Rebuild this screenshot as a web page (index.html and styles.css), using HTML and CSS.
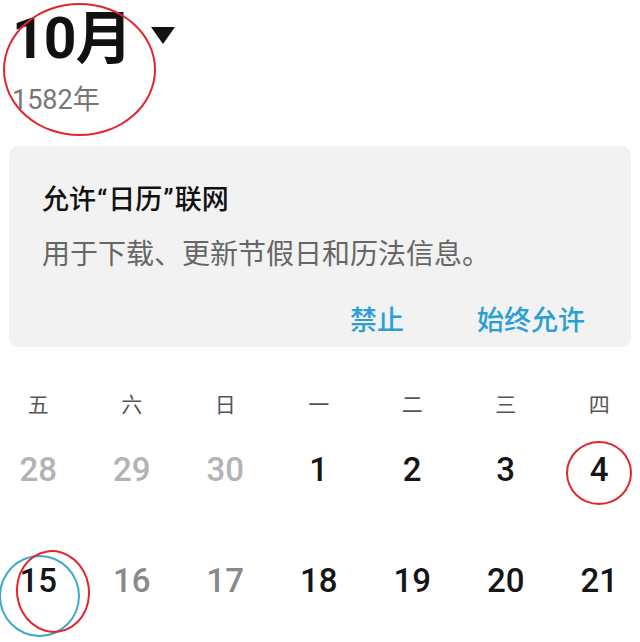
FILE: index.html
```html
<!DOCTYPE html>
<html lang="zh-CN">
<head>
<meta charset="utf-8">
<link rel="stylesheet" href="styles.css">
</head>
<body>
<div class="page">
  <header class="header">
    <div class="month-row">
      <span class="month">10月</span>
      <svg class="caret" width="24" height="17" viewBox="0 0 24 17"><polygon points="0,0 24,0 12,17" fill="#111"/></svg>
    </div>
    <div class="year">1582年</div>
  </header>

  <section class="card">
    <div class="card-title">允许<span class="quote">“</span>日历<span class="quote">”</span>联网</div>
    <div class="card-body">用于下载、更新节假日和历法信息。</div>
    <div class="card-actions">
      <span class="btn">禁止</span>
      <span class="btn">始终允许</span>
    </div>
  </section>

  <div class="weekdays">
    <span>五</span><span>六</span><span>日</span><span>一</span><span>二</span><span>三</span><span>四</span>
  </div>
  <div class="dates">
    <span class="other">28</span><span class="other">29</span><span class="other">30</span><span>1</span><span>2</span><span>3</span><span>4</span>
  </div>
  <div class="dates row2">
    <span>15</span><span class="muted">16</span><span class="muted">17</span><span>18</span><span>19</span><span>20</span><span>21</span>
  </div>

  <div class="mark mark-header"></div>
  <div class="mark mark-four"></div>
  <div class="mark mark-cyan"></div>
  <div class="mark mark-fifteen"></div>
</div>
</body>
</html>
```

FILE: styles.css
```css
* { box-sizing: border-box; }
html, body { margin: 0; padding: 0; background: #fff; }
body {
  font-family: Roboto, "Noto Sans CJK SC", sans-serif;
  color: #111;
  width: 640px;
  height: 642px;
  overflow: hidden;
}
.page { position: relative; width: 640px; height: 642px; }

.header { padding: 6px 0 0 12px; }
.month-row { display: flex; align-items: flex-start; gap: 20px; }
.month {
  font-size: 57px;
  font-weight: 700;
  line-height: 66px;
  letter-spacing: -1px;
}
.caret { margin-top: 21px; }
.year {
  font-size: 27px;
  color: #777;
  line-height: 30px;
  margin-top: 13px;
}

.card {
  margin: 31px 9px 0;
  height: 201px;
  background: #f2f2f2;
  border-radius: 10px;
  padding: 36px 46px 0 33px;
  font-family: "Noto Sans CJK SC", sans-serif;
}
.card-title {
  font-size: 27px;
  font-weight: 500;
  line-height: 32px;
  color: #111;
}
.card-title .quote {
  font-family: Roboto, sans-serif;
  font-weight: 500;
  padding: 0 1px;
}
.card-body {
  font-size: 28px;
  line-height: 32px;
  color: #666;
  margin-top: 20px;
}
.card-actions {
  display: flex;
  justify-content: flex-end;
  gap: 73px;
  margin-top: 35px;
}
.btn {
  font-size: 27px;
  line-height: 32px;
  color: #2a9fd6;
  font-weight: 500;
}

.weekdays, .dates {
  display: grid;
  grid-template-columns: repeat(7, 93.5px);
  margin-left: -8.5px;
  text-align: center;
}
.weekdays {
  margin-top: 43px;
  font-family: "Noto Sans CJK SC", sans-serif;
  font-size: 21px;
  line-height: 26px;
  color: #555;
}
.dates {
  font-size: 33px;
  font-weight: 500;
  line-height: 40px;
  color: #151515;
}
.dates:not(.row2) { margin-top: 34px; }
.dates.row2 { margin-top: 71px; }
.dates .other { color: #b3b3b3; }
.dates .muted { color: #8a8a8a; }

.mark {
  position: absolute;
  border-radius: 50%;
  border: 2px solid #e3262c;
  pointer-events: none;
}
.mark-header { left: 3px; top: 3px; width: 153px; height: 133px; }
.mark-four { left: 566px; top: 441px; width: 66px; height: 64px; }
.mark-cyan { left: -1px; top: 555px; width: 81px; height: 82px; border-color: #3fa9c9; }
.mark-fifteen { left: 16px; top: 550px; width: 74px; height: 83px; transform: rotate(-8deg); }
```
